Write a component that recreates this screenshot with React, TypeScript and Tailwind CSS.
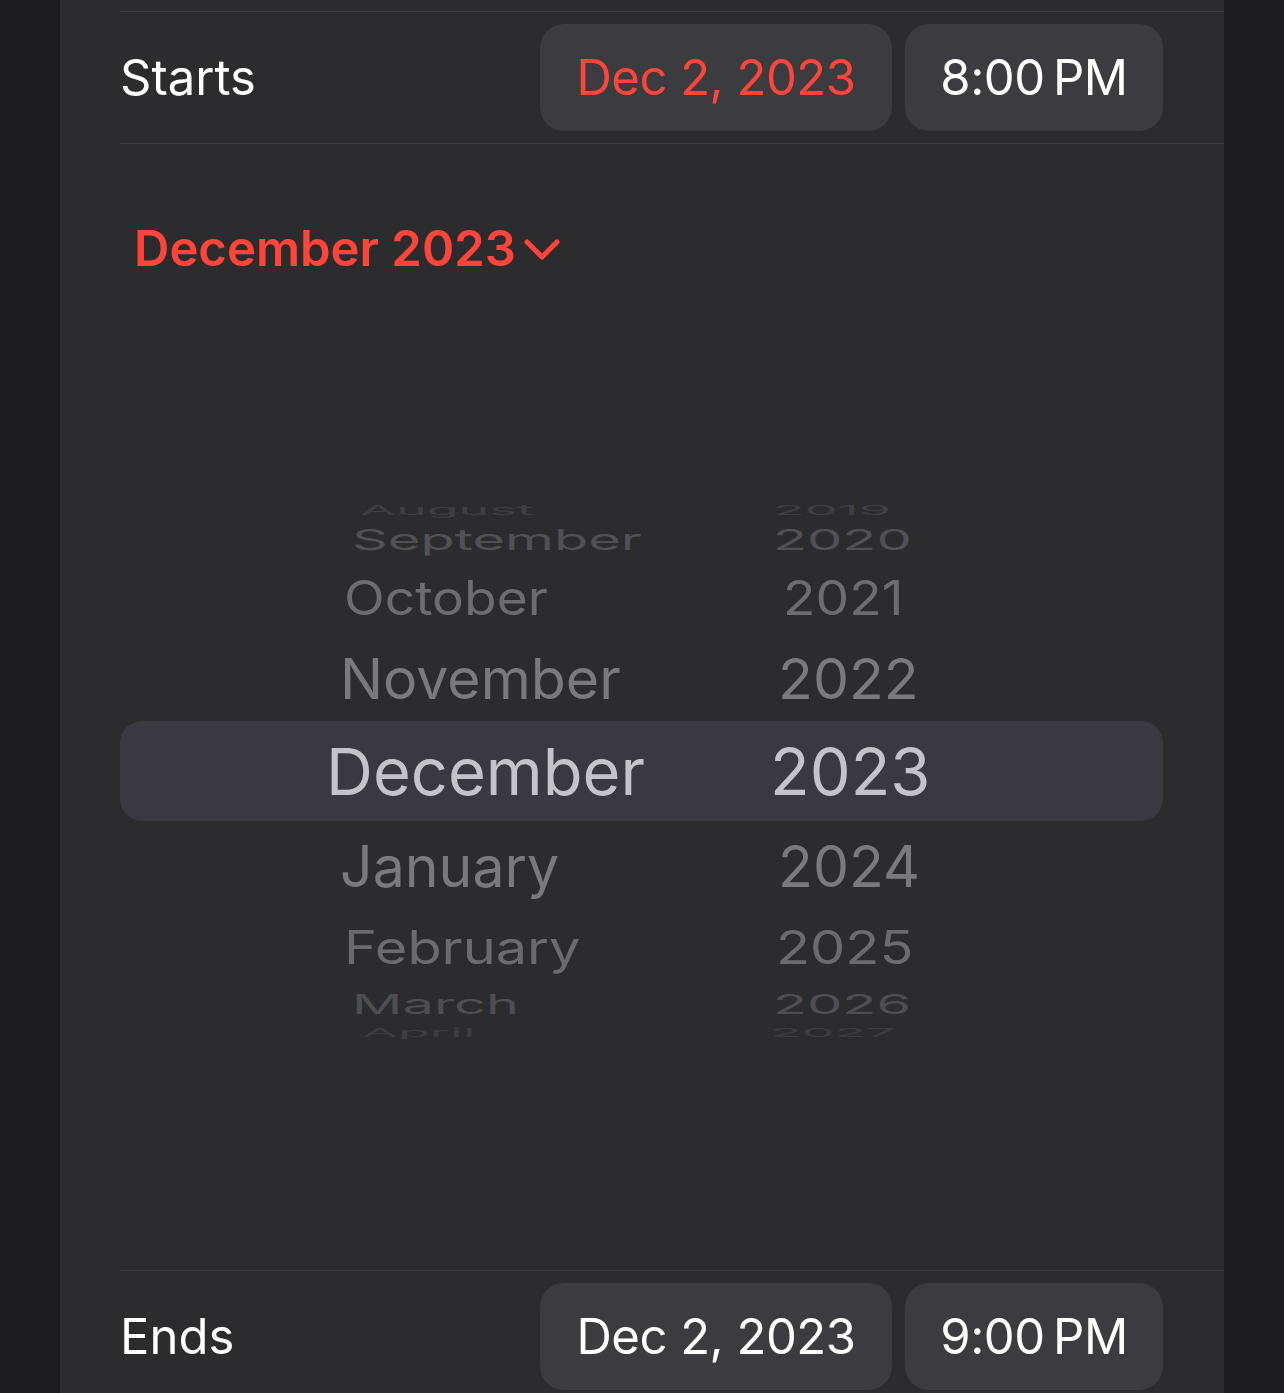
const font = { fontFamily: "Inter, 'Noto Sans', sans-serif" };

type WheelRow = {
  month: string;
  year: string;
  h: number;
  mx: number;
  yx: number;
  sx: number;
  sy: number;
  color: string;
};

const above: WheelRow[] = [
  { month: "August", year: "2019", h: 18, mx: 360, yx: 773, sx: 0.8, sy: 0.2, color: "#3f3f43" },
  { month: "September", year: "2020", h: 40, mx: 352, yx: 773, sx: 0.86, sy: 0.44, color: "#515155" },
  { month: "October", year: "2021", h: 76, mx: 344, yx: 783, sx: 0.82, sy: 0.73, color: "#6d6d71" },
  { month: "November", year: "2022", h: 86, mx: 340, yx: 778, sx: 0.88, sy: 0.87, color: "#7a7a7e" },
];

const below: WheelRow[] = [
  { month: "January", year: "2024", h: 90, mx: 340, yx: 778, sx: 0.88, sy: 0.88, color: "#7a7a7e" },
  { month: "February", year: "2025", h: 72, mx: 344, yx: 776, sx: 0.86, sy: 0.71, color: "#6b6b6f" },
  { month: "March", year: "2026", h: 42, mx: 352, yx: 773, sx: 0.86, sy: 0.42, color: "#4e4e52" },
  { month: "April", year: "2027", h: 14, mx: 362, yx: 770, sx: 0.8, sy: 0.18, color: "#3d3d40" },
];

function Row({ row }: { row: WheelRow }) {
  const t = { transform: `scale(${row.sx}, ${row.sy})`, color: row.color };
  return (
    <div className="flex items-center whitespace-nowrap" style={{ height: row.h }}>
      <div style={{ marginLeft: row.mx - 120, width: row.yx - row.mx }}>
        <span className="inline-block origin-left text-[65px] leading-none" style={t}>
          {row.month}
        </span>
      </div>
      <span className="inline-block origin-left text-[65px] leading-none" style={t}>
        {row.year}
      </span>
    </div>
  );
}

function DateRow({ label, date, time, red }: { label: string; date: string; time: string; red?: boolean }) {
  return (
    <div className="flex h-[131px] items-center justify-between pr-[61px]">
      <span className="text-[49px] text-white">{label}</span>
      <div className="flex gap-[13px]">
        <div
          className={`flex h-[107px] w-[352px] items-center justify-center rounded-[24px] bg-[#3c3b40] text-[49px] tracking-[-0.01em] ${
            red ? "text-[#ff453a]" : "text-white"
          }`}
        >
          {date}
        </div>
        <div className="flex h-[107px] w-[258px] items-center justify-center rounded-[24px] bg-[#3c3b40] text-[49px] tracking-[-0.01em] text-white">
          {time}
        </div>
      </div>
    </div>
  );
}

export default function App() {
  return (
    <div className="flex h-[1393px] justify-center overflow-hidden bg-[#1c1c1e]" style={font}>
      <div className="h-full w-[1164px] bg-[#2c2c2e] pl-[60px]">
        <div className="h-[11px]" />
        <div className="h-px bg-[#3d3d40]" />
        <DateRow label="Starts" date="Dec 2, 2023" time={"8:00\u2009PM"} red />
        <div className="h-px bg-[#3d3d40]" />

        <section className="h-[1126px] pt-[75px]">
          <div className="flex items-center gap-[8px] pl-[14px] text-[49px] font-semibold leading-[60px] text-[#ff453a]">
            <span>December 2023</span>
            <svg width="36" height="24" viewBox="0 0 36 24" fill="none" className="mt-[2px]">
              <path d="M3 4 L18 19 L33 4" stroke="#ff453a" strokeWidth="5" strokeLinecap="round" strokeLinejoin="round" />
            </svg>
          </div>

          <div className="mt-[222px] pr-[61px]">
            {above.map((r) => (
              <Row key={r.month} row={r} />
            ))}
            <div className="flex h-[100px] items-center whitespace-nowrap rounded-[22px] bg-[#3a393f] text-[#c3c3c8]">
              <div className="ml-[206px] w-[444px]">
                <span className="text-[65px] leading-none">December</span>
              </div>
              <span className="text-[65px] leading-none">2023</span>
            </div>
            {below.map((r) => (
              <Row key={r.month} row={r} />
            ))}
          </div>
        </section>

        <div className="h-px bg-[#3d3d40]" />
        <DateRow label="Ends" date="Dec 2, 2023" time={"9:00\u2009PM"} />
      </div>
    </div>
  );
}
